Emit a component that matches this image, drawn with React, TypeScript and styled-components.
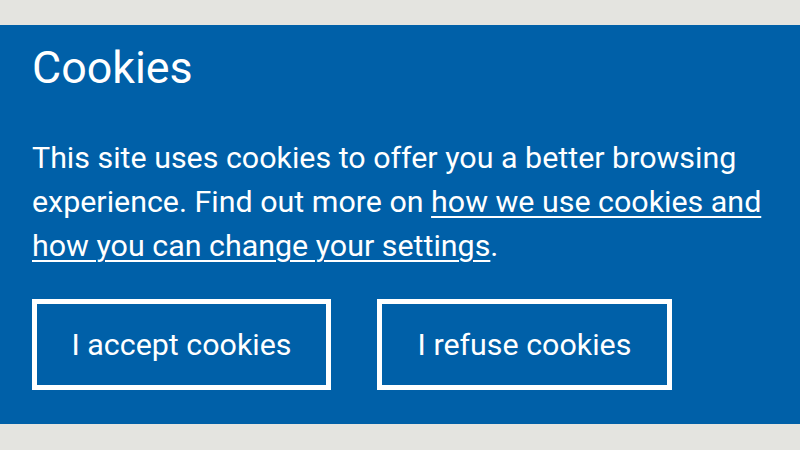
import React from "react";
import styled, { createGlobalStyle } from "styled-components";

const Global = createGlobalStyle`
  html, body { margin: 0; padding: 0; background: #e4e4e0; }
  body { font-family: Roboto, "Noto Sans", sans-serif; }
`;

const Page = styled.div`
  width: 800px;
  height: 450px;
  padding-top: 25px;
  box-sizing: border-box;
  background: #e4e4e0;
`;

const Banner = styled.section`
  background: #0060a8;
  color: #ffffff;
  height: 399px;
  box-sizing: border-box;
  padding: 18px 32px 0 32px;
`;

const Title = styled.h1`
  margin: 0;
  font-size: 44.8px;
  line-height: 50px;
  font-weight: 400;
`;

const Text = styled.p`
  margin: 43px 0 0 0;
  font-size: 30.4px;
  line-height: 44px;
  font-weight: 400;
`;

const Link = styled.a`
  color: #ffffff;
  text-decoration: underline;
  text-underline-offset: 4px;
  text-decoration-thickness: 2px;
`;

const Actions = styled.div`
  display: flex;
  gap: 46px;
  margin-top: 31px;
`;

const Button = styled.button<{ $w: number }>`
  width: ${(p) => p.$w}px;
  height: 91px;
  box-sizing: border-box;
  background: transparent;
  border: 5px solid #ffffff;
  color: #ffffff;
  font-family: Roboto, "Noto Sans", sans-serif;
  font-size: 30.4px;
  font-weight: 400;
  padding: 0;
  cursor: pointer;
`;

export default function App() {
  return (
    <>
      <Global />
      <Page>
        <Banner>
          <Title>Cookies</Title>
          <Text>
            This site uses cookies to offer you a better browsing experience.
            Find out more on{" "}
            <Link href="#">how we use cookies and how you can change your settings</Link>.
          </Text>
          <Actions>
            <Button $w={299}>I accept cookies</Button>
            <Button $w={295}>I refuse cookies</Button>
          </Actions>
        </Banner>
      </Page>
    </>
  );
}
